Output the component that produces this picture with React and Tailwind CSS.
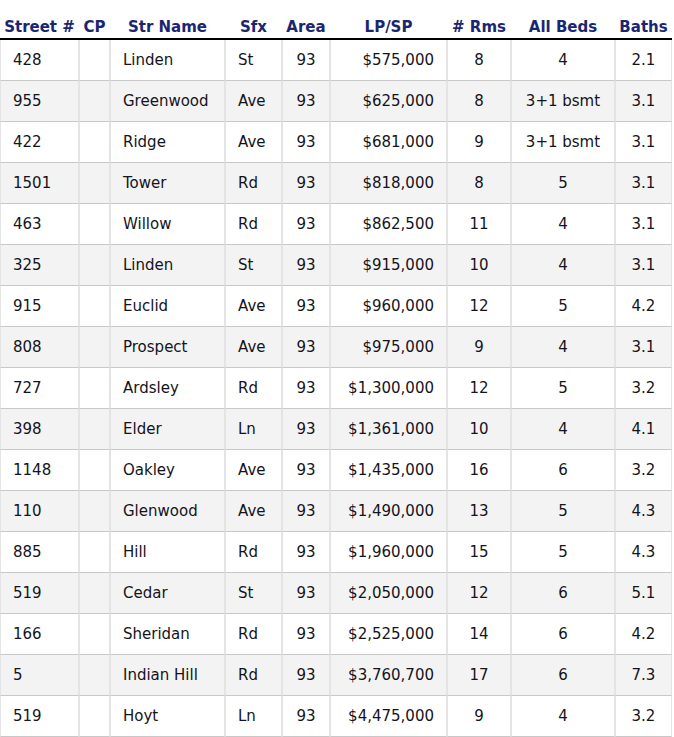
const rows = [
  ["428", "Linden", "St", "$575,000", "8", "4", "2.1"],
  ["955", "Greenwood", "Ave", "$625,000", "8", "3+1 bsmt", "3.1"],
  ["422", "Ridge", "Ave", "$681,000", "9", "3+1 bsmt", "3.1"],
  ["1501", "Tower", "Rd", "$818,000", "8", "5", "3.1"],
  ["463", "Willow", "Rd", "$862,500", "11", "4", "3.1"],
  ["325", "Linden", "St", "$915,000", "10", "4", "3.1"],
  ["915", "Euclid", "Ave", "$960,000", "12", "5", "4.2"],
  ["808", "Prospect", "Ave", "$975,000", "9", "4", "3.1"],
  ["727", "Ardsley", "Rd", "$1,300,000", "12", "5", "3.2"],
  ["398", "Elder", "Ln", "$1,361,000", "10", "4", "4.1"],
  ["1148", "Oakley", "Ave", "$1,435,000", "16", "6", "3.2"],
  ["110", "Glenwood", "Ave", "$1,490,000", "13", "5", "4.3"],
  ["885", "Hill", "Rd", "$1,960,000", "15", "5", "4.3"],
  ["519", "Cedar", "St", "$2,050,000", "12", "6", "5.1"],
  ["166", "Sheridan", "Rd", "$2,525,000", "14", "6", "4.2"],
  ["5", "Indian Hill", "Rd", "$3,760,700", "17", "6", "7.3"],
  ["519", "Hoyt", "Ln", "$4,475,000", "9", "4", "3.2"],
]

const headers = [
  { label: "Street #", w: "w-[79px]" },
  { label: "CP", w: "w-[31px]" },
  { label: "Str Name", w: "w-[115px]" },
  { label: "Sfx", w: "w-[57px]" },
  { label: "Area", w: "w-[48px]" },
  { label: "LP/SP", w: "w-[117px]" },
  { label: "# Rms", w: "w-[64px]" },
  { label: "All Beds", w: "w-[104px]" },
  { label: "Baths", w: "w-[57px]" },
]

const cell = "h-[41px] border-x border-b border-x-[#e4e4e4] border-b-[#c8c8c8] px-3 text-[15px] text-[#141420]"

export default function App() {
  return (
    <div className="bg-white w-[674px] overflow-hidden pt-[16px] font-['DejaVu_Sans',Verdana,sans-serif]">
      <table className="table-fixed w-[672px] border-separate border-spacing-0">
        <colgroup>
          {headers.map((h) => (
            <col key={h.label} className={h.w} />
          ))}
        </colgroup>
        <thead>
          <tr>
            {headers.map((h) => (
              <th
                key={h.label}
                className="h-[24px] border-b-2 border-b-black text-center align-middle text-[15px] leading-[18px] font-bold text-[#1b2670] whitespace-nowrap p-0"
              >
                {h.label}
              </th>
            ))}
          </tr>
        </thead>
        <tbody>
          {rows.map((r, i) => (
            <tr key={i} className={i % 2 ? "bg-[#f3f3f3]" : "bg-white"}>
              <td className={`${cell} text-left`}>{r[0]}</td>
              <td className={cell}></td>
              <td className={`${cell} text-left`}>{r[1]}</td>
              <td className={`${cell} text-left`}>{r[2]}</td>
              <td className={`${cell} text-center`}>93</td>
              <td className={`${cell} text-right`}>{r[3]}</td>
              <td className={`${cell} text-center`}>{r[4]}</td>
              <td className={`${cell} text-center whitespace-nowrap`}>{r[5]}</td>
              <td className={`${cell} text-center`}>{r[6]}</td>
            </tr>
          ))}
        </tbody>
      </table>
    </div>
  )
}
